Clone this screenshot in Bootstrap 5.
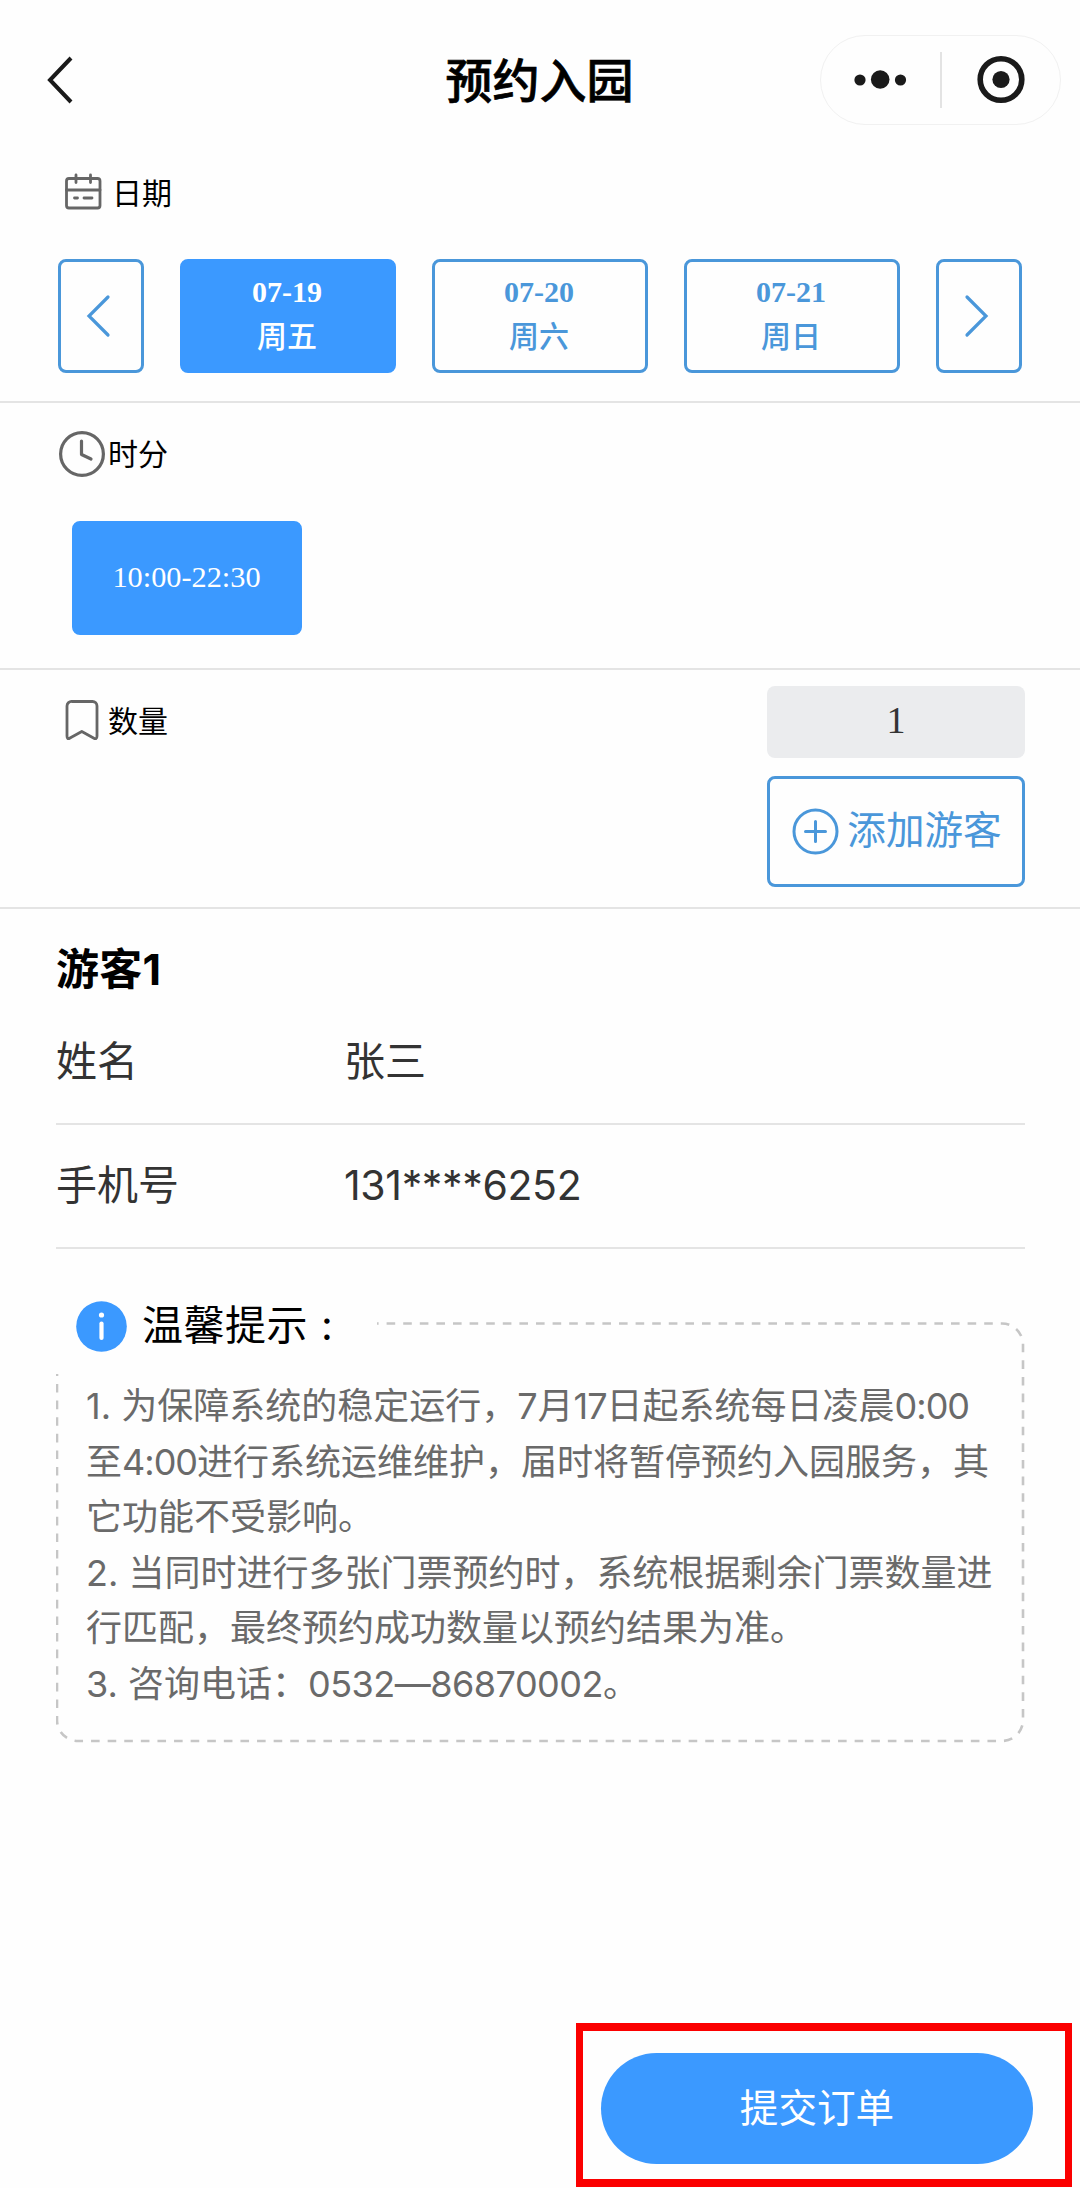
<!DOCTYPE html>
<html lang="zh-CN">
<head>
<meta charset="utf-8">
<meta name="viewport" content="width=device-width, initial-scale=1">
<title>预约入园</title>
<link href="https://cdn.jsdelivr.net/npm/bootstrap@5.3.0/dist/css/bootstrap.min.css" rel="stylesheet">
<style>
  :root { --fill: #3b99ff; --line: #4a97da; --rule: #e4e4e4; }
  body { font-family: Inter, "Noto Sans CJK SC", sans-serif; color: #000; background: #fefefe; width: 1080px; min-height: 2188px; line-height: 1.2; }
  svg { display: block; flex: none; }
  .topbar { height: 160px; padding: 0 19px 0 46px; }
  .topbar h1 { font-size: 47px; font-weight: 500; -webkit-text-stroke: .7px #000; line-height: 60px; padding: 2px 1px 0 0; }
  .capsule { width: 241px; height: 90px; border: 1px solid #f1f1f1; border-radius: 45px; }
  .capsule-split { width: 2px; height: 56px; background: #e3e3e3; }
  .section-label { font-size: 30px; line-height: 46px; }
  .date-part { height: 243px; padding: 10px 58px 0; border-bottom: 2px solid var(--rule); }
  .time-part { height: 267px; padding: 28px 58px 0; border-bottom: 2px solid var(--rule); }
  .count-part { height: 239px; padding: 16px 55px 0 65px; border-bottom: 2px solid var(--rule); }
  .date-row { gap: 36px; margin-top: 43px; }
  .tile { height: 114px; border: 3px solid var(--line); border-radius: 8px; color: var(--line); background: transparent; padding: 0; }
  .tile-arrow { width: 86px; padding: 0 5px 1px 0; }
  .tile-day { width: 216px; font: bold 30px/43px "Liberation Serif", "Noto Serif", serif; padding: 8px 2px 0 0; }
  .tile-day span { font: 500 30px/42px "Noto Sans CJK SC", sans-serif; }
  .tile-on { background: var(--fill); border-color: var(--fill); color: #fff; }
  .tile-time { width: 230px; margin: 44px 0 0 14px; font: 30.3px/104px "Liberation Serif", serif; padding: 0 1px 3px 0; }
  .count-col { width: 258px; gap: 18px; }
  .count-box { height: 72px; border-radius: 8px; background: #ebecee; color: #333; font: 38px/68px "Liberation Serif", serif; }
  .tile-add { height: 111px; font-size: 38.6px; gap: 8px; padding: 0 0 1px 2px; }
  .tile-add span { padding-bottom: 2px; }
  .visitor { padding: 0 55px 0 56px; color: #333; }
  .visitor h2 { font-size: 43px; font-weight: 700; line-height: 60px; margin: 0; padding-top: 30px; color: #000; letter-spacing: .3px; }
  .field-row { font-size: 41px; height: 125px; border-bottom: 2px solid var(--rule); }
  .name-row { padding-top: 2px; height: 126px; }
  .phone-row { height: 124px; }
  .field-name { width: 288px; }
  .phone { letter-spacing: -.35px; }
  .tips { margin: 73px 55px 0 56px; height: 421px; }
  .tips-frame { left: 0; top: 0; }
  .tips-head { height: 52px; padding-left: 20px; gap: 15px; font-size: 41px; line-height: 48px; top: -22px; }
  .tips-head .caption-text { letter-spacing: .5px; padding-bottom: 3px; }
  .tips-head .colon { padding-left: 13px; }
  .tips-text { font-size: 36px; line-height: 55.5px; color: #6a6a6a; padding: 5px 0 0 30px; margin: 0; white-space: nowrap; }
  .num { letter-spacing: -1px; }
  .num-tel { letter-spacing: -.5px; }
  .submit-frame { width: 496px; height: 164px; border: 8px solid #fb0000; border-width: 8px 7px; margin: 280px 8px 0 auto; padding: 22px 32px 0 18px; }
  .submit-btn { height: 111px; border-radius: 56px; background: var(--fill); color: #fff; font-size: 38.6px; border: 0; }
</style>
</head>
<body>
<header class="topbar d-flex align-items-center justify-content-between position-relative">
  <svg width="30" height="50" viewBox="0 0 30 50" fill="none" stroke="#1a1a1a" stroke-width="4"><path d="M25 3 4 25l21 22"/></svg>
  <h1 class="position-absolute start-0 end-0 text-center m-0">预约入园</h1>
  <div class="capsule d-flex align-items-center">
    <svg width="119" height="56" viewBox="0 0 119 56" fill="#1a1a1a"><circle cx="39" cy="28" r="5.600"/><circle cx="59.200" cy="27.500" r="9.300"/><circle cx="79.500" cy="28" r="5.600"/></svg>
    <div class="capsule-split"></div>
    <svg width="118" height="56" viewBox="0 0 118 56"><circle cx="59" cy="27.500" r="20.800" fill="none" stroke="#1a1a1a" stroke-width="5.600"/><circle cx="59" cy="27.500" r="8.600" fill="#1a1a1a"/></svg>
  </div>
</header>

<section class="date-part">
  <div class="section-label d-flex align-items-center">
    <svg width="54" height="46" viewBox="0 0 54 46" fill="none" stroke="#666" stroke-width="2.800" stroke-linecap="round"><rect x="8.500" y="8.500" width="33.500" height="29.500" rx="2.500"/><path d="M8.500 20H42M18 5v7.500M32.500 5v7.500M16.500 28h3M26 28h8"/></svg>
    日期
  </div>
  <div class="date-row d-flex">
    <button class="tile tile-arrow d-flex align-items-center justify-content-center"><svg width="26" height="46" viewBox="0 0 26 46" fill="none" stroke="currentColor" stroke-width="3.200" stroke-linecap="round"><path d="M22 4 3 23l19 19"/></svg></button>
    <button class="tile tile-day tile-on d-flex flex-column align-items-center">07-19<span>周五</span></button>
    <button class="tile tile-day d-flex flex-column align-items-center">07-20<span>周六</span></button>
    <button class="tile tile-day d-flex flex-column align-items-center">07-21<span>周日</span></button>
    <button class="tile tile-arrow d-flex align-items-center justify-content-center"><svg width="26" height="46" viewBox="0 0 26 46" fill="none" stroke="currentColor" stroke-width="3.200" stroke-linecap="round"><path d="M3 4l19 19L3 42"/></svg></button>
  </div>
</section>

<section class="time-part">
  <div class="section-label d-flex align-items-center">
    <svg width="50" height="46" viewBox="0 0 50 46" fill="none" stroke="#666" stroke-width="3.200" stroke-linecap="round" stroke-linejoin="round"><circle cx="24" cy="23" r="21.400"/><path d="M23.500 10v13.500l9.500 4.500"/></svg>
    <span>时分</span>
  </div>
  <button class="tile tile-on tile-time d-block">10:00-22:30</button>
</section>

<section class="count-part d-flex justify-content-between align-items-start">
  <div class="section-label d-flex align-items-center pt-2 mt-1">
    <svg width="43" height="46" viewBox="0 0 43 46" fill="none" stroke="#666" stroke-width="2.800" stroke-linejoin="round"><path d="M7 3.500h20.500a4.500 4.500 0 0 1 4.500 4.500v30q0 4-3.500 2L16.800 33.500 5 40Q2 42 2 38V8A4.500 4.500 0 0 1 7 3.500z"/></svg>
    <span>数量</span>
  </div>
  <div class="count-col d-flex flex-column">
    <div class="count-box text-center">1</div>
    <button class="tile tile-add d-flex align-items-center justify-content-center"><svg width="47" height="47" viewBox="0 0 47 47" fill="none" stroke="currentColor" stroke-width="3" stroke-linecap="round"><circle cx="23.500" cy="23.500" r="21.500"/><path d="M13.500 23.500h20M23.500 13.500v20"/></svg><span>添加游客</span></button>
  </div>
</section>

<section class="visitor">
  <h2>游客1</h2>
  <div class="field-row name-row d-flex align-items-center"><div class="field-name">姓名</div><div>张三</div></div>
  <div class="field-row phone-row d-flex align-items-center"><div class="field-name">手机号</div><div class="phone">131****6252</div></div>
</section>

<section class="tips position-relative">
  <svg class="tips-frame position-absolute" width="969" height="421" viewBox="0 0 969 421" fill="none" stroke="#c6c6c6" stroke-width="2.600" stroke-dasharray="8.600 8" stroke-dashoffset="7"><path d="M321 1.500H946a21 21 0 0 1 21 21V398a21 21 0 0 1-21 21H22A21 21 0 0 1 1 398V52"/></svg>
  <div class="tips-head d-flex align-items-center position-relative">
    <svg width="51" height="51" viewBox="0 0 51 51"><circle cx="25.500" cy="25.500" r="25.300" fill="#3b99ff"/><circle cx="25.500" cy="14" r="2.600" fill="#fff"/><path d="M25.500 22.500v14.500" stroke="#fff" stroke-width="4.200" stroke-linecap="round"/></svg>
    <div class="caption-text">温馨提示<span class="colon">:</span></div>
  </div>
  <p class="tips-text">1. 为保障系统的稳定运行，7月<span class="num">17</span>日起系统每日凌晨<span class="num">0:00</span><br>至<span class="num">4:00</span>进行系统运维维护，届时将暂停预约入园服务，其<br>它功能不受影响。<br>2. 当同时进行多张门票预约时，系统根据剩余门票数量进<br>行匹配，最终预约成功数量以预约结果为准。<br>3. 咨询电话：<span class="num-tel">0532—86870002</span>。</p>
</section>

<footer class="submit-frame">
  <button class="submit-btn w-100">提交订单</button>
</footer>
<script src="https://cdn.jsdelivr.net/npm/bootstrap@5.3.0/dist/js/bootstrap.bundle.min.js"></script>
</body>
</html>
